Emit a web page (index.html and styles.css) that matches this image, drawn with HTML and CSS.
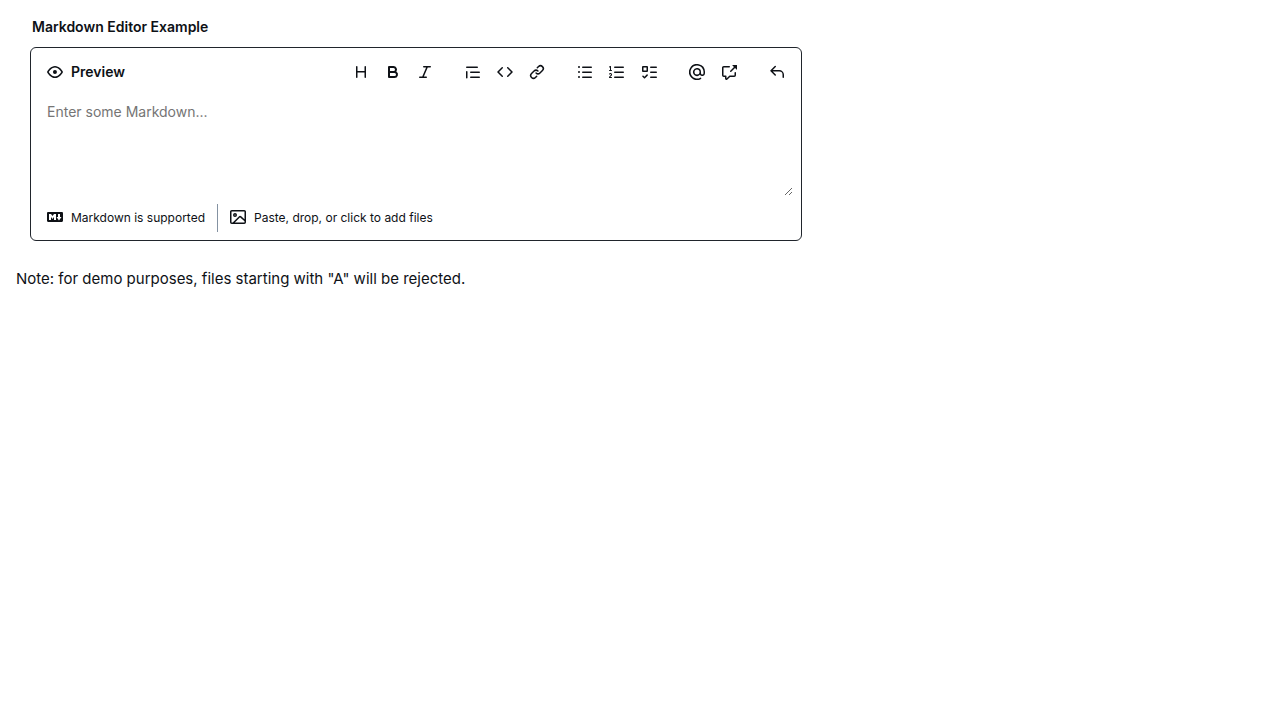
FILE: index.html
```
<!DOCTYPE html>
<html lang="en">
<head>
<meta charset="utf-8">
<title>Markdown Editor Example</title>
<link rel="stylesheet" href="styles.css">
</head>
<body>
<main class="page">
  <fieldset class="field">
    <legend class="field-label">Markdown Editor Example</legend>
    <div class="editor">
      <header class="editor-header">
        <button type="button" class="preview-button">
          <svg class="icon" viewBox="0 0 16 16" aria-hidden="true"><path d="M8 2c1.981 0 3.671.992 4.933 2.078 1.27 1.091 2.187 2.345 2.637 3.023a1.62 1.62 0 0 1 0 1.798c-.45.678-1.367 1.932-2.637 3.023C11.67 13.008 9.981 14 8 14c-1.981 0-3.671-.992-4.933-2.078C1.797 10.83.88 9.576.43 8.898a1.62 1.62 0 0 1 0-1.798c.45-.677 1.367-1.931 2.637-3.022C4.33 2.992 6.019 2 8 2ZM1.679 7.932a.12.12 0 0 0 0 .136c.411.622 1.241 1.75 2.366 2.717C5.176 11.758 6.527 12.5 8 12.5c1.473 0 2.825-.742 3.955-1.715 1.124-.967 1.954-2.096 2.366-2.717a.12.12 0 0 0 0-.136c-.412-.621-1.242-1.75-2.366-2.717C10.824 4.242 9.473 3.5 8 3.5c-1.473 0-2.825.742-3.955 1.715-1.124.967-1.954 2.096-2.366 2.717ZM8 10a2 2 0 1 1-.001-3.999A2 2 0 0 1 8 10Z"/></svg>
          <span>Preview</span>
        </button>
        <div class="toolbar" role="toolbar" aria-label="Formatting tools">
          <div class="tool-group">
            <button type="button" class="tool" aria-label="Heading"><svg class="icon" viewBox="0 0 16 16" aria-hidden="true"><path d="M3.75 2a.75.75 0 0 1 .75.75V7h7V2.75a.75.75 0 0 1 1.5 0v10.5a.75.75 0 0 1-1.5 0V8.5h-7v4.75a.75.75 0 0 1-1.5 0V2.75A.75.75 0 0 1 3.75 2Z"/></svg></button>
            <button type="button" class="tool" aria-label="Bold"><svg class="icon" viewBox="0 0 16 16" aria-hidden="true"><path d="M4 2h4.5a3.501 3.501 0 0 1 2.852 5.53A3.499 3.499 0 0 1 9.5 14H4a1 1 0 0 1-1-1V3a1 1 0 0 1 1-1Zm1 7v3h4.5a1.5 1.5 0 0 0 0-3Zm3.5-2a1.5 1.5 0 0 0 0-3H5v3Z"/></svg></button>
            <button type="button" class="tool" aria-label="Italic"><svg class="icon" viewBox="0 0 16 16" aria-hidden="true"><path d="M6 2.75A.75.75 0 0 1 6.75 2h6.5a.75.75 0 0 1 0 1.5h-2.505l-3.858 9H9.25a.75.75 0 0 1 0 1.5h-6.5a.75.75 0 0 1 0-1.5h2.505l3.858-9H6.75A.75.75 0 0 1 6 2.75Z"/></svg></button>
          </div>
          <div class="tool-group">
            <button type="button" class="tool" aria-label="Quote"><svg class="icon" viewBox="0 0 16 16" aria-hidden="true"><path d="M1.75 2.5h10.5a.75.75 0 0 1 0 1.5H1.75a.75.75 0 0 1 0-1.5Zm4 5h8.5a.75.75 0 0 1 0 1.5h-8.5a.75.75 0 0 1 0-1.5Zm0 5h8.5a.75.75 0 0 1 0 1.5h-8.5a.75.75 0 0 1 0-1.5ZM2.5 7.75v6a.75.75 0 0 1-1.5 0v-6a.75.75 0 0 1 1.5 0Z"/></svg></button>
            <button type="button" class="tool" aria-label="Code"><svg class="icon" viewBox="0 0 16 16" aria-hidden="true"><path d="m11.28 3.22 4.25 4.25a.75.75 0 0 1 0 1.06l-4.25 4.25a.749.749 0 0 1-1.275-.326.749.749 0 0 1 .215-.734L13.94 8l-3.72-3.72a.749.749 0 0 1 .326-1.275.749.749 0 0 1 .734.215Zm-6.56 0a.751.751 0 0 1 1.042.018.751.751 0 0 1 .018 1.042L2.06 8l3.72 3.72a.749.749 0 0 1-.326 1.275.749.749 0 0 1-.734-.215L.47 8.53a.75.75 0 0 1 0-1.06Z"/></svg></button>
            <button type="button" class="tool" aria-label="Link"><svg class="icon" viewBox="0 0 16 16" aria-hidden="true"><path d="m7.775 3.275 1.25-1.25a3.5 3.5 0 1 1 4.95 4.95l-2.5 2.5a3.5 3.5 0 0 1-4.95 0 .751.751 0 0 1 .018-1.042.751.751 0 0 1 1.042-.018 1.998 1.998 0 0 0 2.83 0l2.5-2.5a2.002 2.002 0 0 0-2.83-2.83l-1.25 1.25a.751.751 0 0 1-1.042-.018.751.751 0 0 1-.018-1.042Zm-4.69 9.64a1.998 1.998 0 0 0 2.83 0l1.25-1.25a.751.751 0 0 1 1.042.018.751.751 0 0 1 .018 1.042l-1.25 1.25a3.5 3.5 0 1 1-4.95-4.95l2.5-2.5a3.5 3.5 0 0 1 4.95 0 .751.751 0 0 1-.018 1.042.751.751 0 0 1-1.042.018 1.998 1.998 0 0 0-2.83 0l-2.5 2.5a1.998 1.998 0 0 0 0 2.83Z"/></svg></button>
          </div>
          <div class="tool-group">
            <button type="button" class="tool" aria-label="Unordered list"><svg class="icon" viewBox="0 0 16 16" aria-hidden="true"><path d="M5.75 2.5h8.5a.75.75 0 0 1 0 1.5h-8.5a.75.75 0 0 1 0-1.5Zm0 5h8.5a.75.75 0 0 1 0 1.5h-8.5a.75.75 0 0 1 0-1.5Zm0 5h8.5a.75.75 0 0 1 0 1.5h-8.5a.75.75 0 0 1 0-1.5ZM2 14a1 1 0 1 1 0-2 1 1 0 0 1 0 2Zm1-6a1 1 0 1 1-2 0 1 1 0 0 1 2 0ZM2 4a1 1 0 1 1 0-2 1 1 0 0 1 0 2Z"/></svg></button>
            <button type="button" class="tool" aria-label="Numbered list"><svg class="icon" viewBox="0 0 16 16" aria-hidden="true"><path d="M5 3.25a.75.75 0 0 1 .75-.75h8.5a.75.75 0 0 1 0 1.5h-8.5A.75.75 0 0 1 5 3.25Zm0 5a.75.75 0 0 1 .75-.75h8.5a.75.75 0 0 1 0 1.5h-8.5A.75.75 0 0 1 5 8.25Zm0 5a.75.75 0 0 1 .75-.75h8.5a.75.75 0 0 1 0 1.5h-8.5a.75.75 0 0 1-.75-.75ZM.924 10.32a.5.5 0 0 1-.851-.525l.001-.001.001-.002.002-.004.007-.011c.097-.144.215-.273.348-.384.228-.19.588-.392 1.068-.392.468 0 .858.181 1.126.484.259.294.377.673.377 1.038 0 .987-.686 1.495-1.156 1.845l-.047.035c-.303.225-.522.4-.654.597h1.357a.5.5 0 0 1 0 1H.5a.5.5 0 0 1-.5-.5c0-1.005.692-1.52 1.167-1.875l.035-.025c.531-.396.8-.625.8-1.078a.57.57 0 0 0-.128-.376C1.806 10.068 1.695 10 1.5 10a.658.658 0 0 0-.429.163.835.835 0 0 0-.144.153ZM2.003 2.5V6h.503a.5.5 0 0 1 0 1H.5a.5.5 0 0 1 0-1h.503V3.308l-.28.14a.5.5 0 0 1-.446-.895l1.003-.5a.5.5 0 0 1 .723.447Z"/></svg></button>
            <button type="button" class="tool" aria-label="Task list"><svg class="icon" viewBox="0 0 16 16" aria-hidden="true"><path d="M2 2h4a1 1 0 0 1 1 1v4a1 1 0 0 1-1 1H2a1 1 0 0 1-1-1V3a1 1 0 0 1 1-1Zm4.655 8.595a.75.75 0 0 1 0 1.06L4.03 14.28a.75.75 0 0 1-1.06 0l-1.5-1.5a.749.749 0 0 1 .326-1.275.749.749 0 0 1 .734.215l.97.97 2.095-2.095a.75.75 0 0 1 1.06 0ZM9.75 2.5h5.5a.75.75 0 0 1 0 1.5h-5.5a.75.75 0 0 1 0-1.5Zm0 5h5.5a.75.75 0 0 1 0 1.5h-5.5a.75.75 0 0 1 0-1.5Zm0 5h5.5a.75.75 0 0 1 0 1.5h-5.5a.75.75 0 0 1 0-1.5Zm-7.25-9v3h3v-3Z"/></svg></button>
          </div>
          <div class="tool-group">
            <button type="button" class="tool" aria-label="Mention"><svg class="icon" viewBox="0 0 16 16" aria-hidden="true"><path d="M4.75 2.37a6.501 6.501 0 0 0 6.5 11.26.75.75 0 0 1 .75 1.298A7.999 7.999 0 0 1 .989 4.148 8 8 0 0 1 16 7.75v1.5a2.75 2.75 0 0 1-5.072 1.475 3.999 3.999 0 0 1-6.65-4.19A4 4 0 0 1 12 8v1.25a1.25 1.25 0 0 0 2.5 0V7.867a6.5 6.5 0 0 0-9.75-5.496ZM10.5 8a2.5 2.5 0 1 0-5 0 2.5 2.5 0 0 0 5 0Z"/></svg></button>
            <button type="button" class="tool" aria-label="Reference"><svg class="icon" viewBox="0 0 16 16" aria-hidden="true"><path d="M2.75 3.5a.25.25 0 0 0-.25.25v7.5c0 .138.112.25.25.25h2a.75.75 0 0 1 .75.75v2.19l2.72-2.72a.749.749 0 0 1 .53-.22h4.5a.25.25 0 0 0 .25-.25v-2.5a.75.75 0 0 1 1.5 0v2.5A1.75 1.75 0 0 1 13.25 13H9.06l-2.573 2.573A1.458 1.458 0 0 1 4 14.543V13H2.75A1.75 1.75 0 0 1 1 11.25v-7.5C1 2.784 1.784 2 2.75 2h5.5a.75.75 0 0 1 0 1.5ZM16 1.25v4.146a.25.25 0 0 1-.427.177L14.03 4.03l-3.75 3.75a.749.749 0 0 1-1.275-.326.749.749 0 0 1 .215-.734l3.75-3.75-1.543-1.543A.25.25 0 0 1 11.604 1h4.146a.25.25 0 0 1 .25.25Z"/></svg></button>
          </div>
          <div class="tool-group">
            <button type="button" class="tool" aria-label="Saved replies"><svg class="icon" viewBox="0 0 16 16" aria-hidden="true"><path d="M6.78 1.97a.75.75 0 0 1 0 1.06L3.81 6h6.44A4.75 4.75 0 0 1 15 10.75v2.5a.75.75 0 0 1-1.5 0v-2.5a3.25 3.25 0 0 0-3.25-3.25H3.81l2.97 2.97a.749.749 0 0 1-.326 1.275.749.749 0 0 1-.734-.215L1.47 7.28a.75.75 0 0 1 0-1.06l4.25-4.25a.75.75 0 0 1 1.06 0Z"/></svg></button>
          </div>
        </div>
      </header>
      <textarea class="editor-input" aria-label="Markdown value" placeholder="Enter some Markdown..."></textarea>
      <footer class="editor-footer">
        <a class="footer-item" href="#markdown-help">
          <svg class="icon" viewBox="0 0 16 16" aria-hidden="true"><path d="M14.85 3c.63 0 1.15.52 1.14 1.15v7.7c0 .63-.51 1.15-1.15 1.15H1.15C.52 13 0 12.48 0 11.84V4.15C0 3.52.52 3 1.15 3ZM9 11V5H7L5.5 7 4 5H2v6h2V8l1.5 1.92L7 8v3Zm2.99.5L14.5 8H13V5h-2v3H9.5Z"/></svg>
          <span>Markdown is supported</span>
        </a>
        <span class="divider"></span>
        <button type="button" class="footer-item">
          <svg class="icon" viewBox="0 0 16 16" aria-hidden="true"><path d="M16 13.25A1.75 1.75 0 0 1 14.25 15H1.75A1.75 1.75 0 0 1 0 13.25V2.75C0 1.784.784 1 1.75 1h12.5c.966 0 1.75.784 1.75 1.75ZM1.75 2.5a.25.25 0 0 0-.25.25v10.5c0 .138.112.25.25.25h.94l.03-.03 6.077-6.078a1.75 1.75 0 0 1 2.412-.06L14.5 10.31V2.75a.25.25 0 0 0-.25-.25Zm12.5 11a.25.25 0 0 0 .25-.25v-.917l-4.298-3.889a.25.25 0 0 0-.344.009L4.81 13.5ZM7 6a2 2 0 1 1-3.999.001A2 2 0 0 1 7 6ZM5.5 6a.5.5 0 1 0-1 0 .5.5 0 0 0 1 0Z"/></svg>
          <span>Paste, drop, or click to add files</span>
        </button>
      </footer>
    </div>
  </fieldset>
  <p class="note">Note: for demo purposes, files starting with "A" will be rejected.</p>
</main>
</body>
</html>
```
FILE: styles.css
```
* {
  box-sizing: border-box;
}

body {
  margin: 0;
  background: #ffffff;
  color: #0e1116;
  font-family: Inter, "Liberation Sans", sans-serif;
  font-size: 15px;
  line-height: 24px;
}

button,
textarea {
  font: inherit;
  color: inherit;
}

button {
  border: 0;
  padding: 0;
  background: none;
  cursor: pointer;
}

.page {
  padding: 16px;
}

.field {
  max-width: 800px;
  min-width: 0;
  margin: 0;
  border: 0;
  padding: 0 14px;
}

.field-label {
  padding: 0 2px;
  margin-bottom: 9px;
  font-size: 14px;
  font-weight: 600;
  line-height: 22px;
}

.editor {
  display: flex;
  flex-direction: column;
  border: 1px solid #20252c;
  border-radius: 6px;
}

.editor-header {
  display: flex;
  align-items: center;
  justify-content: space-between;
  padding: 8px 8px 8px 16px;
}

.preview-button {
  display: flex;
  align-items: center;
  gap: 8px;
  height: 32px;
  font-size: 14px;
  font-weight: 600;
}

.toolbar {
  display: flex;
  gap: 16px;
}

.tool-group {
  display: flex;
}

.tool {
  display: grid;
  place-items: center;
  width: 32px;
  height: 32px;
}

.icon {
  display: block;
  flex: none;
  width: 16px;
  height: 16px;
  fill: currentColor;
}

.editor-input {
  display: block;
  height: 100px;
  margin: 0 8px;
  border: 0;
  padding: 6px 8px;
  background: none;
  font-size: 14px;
  line-height: 20px;
  resize: vertical;
  outline: 0;
}

.editor-input::placeholder {
  color: #757575;
}

.editor-footer {
  display: flex;
  gap: 12px;
  padding: 8px 16px;
  font-size: 12px;
}

.footer-item {
  display: flex;
  align-items: center;
  gap: 8px;
  height: 28px;
  color: inherit;
  text-decoration: none;
}

.footer-item .icon {
  margin-bottom: 2px;
}

.divider {
  width: 1px;
  background: #8492a2;
}

.note {
  margin: 26px 0 0;
}
```
